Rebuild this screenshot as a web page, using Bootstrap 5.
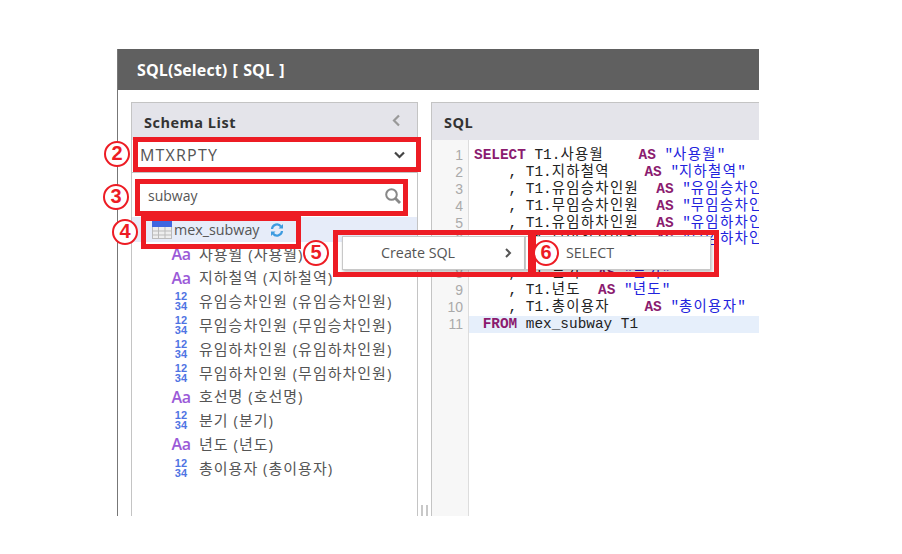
<!DOCTYPE html>
<html lang="ko"><head><meta charset="utf-8">
<title>SQL(Select)</title>
<link rel="stylesheet" href="https://cdn.jsdelivr.net/npm/bootstrap@5.3.0/dist/css/bootstrap.min.css">
<style>
html,body{height:100%;overflow:hidden;background:#fff}
body{font-family:"Open Sans","Noto Sans CJK KR",sans-serif;color:#555;position:relative}
.stage{padding:49px 0 0 117px;width:759px;height:516px;box-sizing:border-box}
.win{height:467px;border-left:1px solid #777}
.win-head{height:41px;background:#606060;color:#fff;font-size:16px;font-weight:700;padding-left:19px;letter-spacing:.1px;word-spacing:1px}
.win-body{padding:12px 0 0 13px;height:426px;gap:13px}
.pane-l{width:287px;border:1px solid #c4c4c4;border-bottom:0}
.pane-r{flex:1;border:1px solid #c4c4c4;border-right:0;border-bottom:0;min-width:0;overflow:hidden}
.pane-h{height:37px;background:#e4e4ea;color:#333;font-size:14.5px;font-weight:700;padding:2px 12px 0;letter-spacing:.5px}
.sel-row{height:33px;padding:0 8px 3px;background:#fff;font-size:16px;letter-spacing:1.2px;border-bottom:1px solid #c4c4c4}
.search-wrap{padding:8px 7px 7px}
.search{height:29px;padding:0 8px 0 9px;font-size:14px;background:#fff}
.tree{font-size:14px}
.root{height:25px;background:#e6ecf9;padding:1px 0 0 20px;gap:2px;color:#555;font-size:14.3px}
.node{height:23.8px;padding-left:38px;gap:7px;font-size:15px;letter-spacing:1px}
.ico{width:22px;flex:none;text-align:center}
.aa{color:#9b5ad8;font-weight:600;font-size:16px;font-family:"Open Sans",sans-serif;letter-spacing:-.5px}
.nn{color:#4f74e3;font-family:"Liberation Sans",sans-serif;font-size:11px;font-weight:700;line-height:10px;display:block;letter-spacing:.2px}
.gutter{width:37px;flex:none;background:#f7f7f7;border-right:1px solid #ddd;color:#999;text-align:right;padding:7px 5px 0 0}
.cl{height:16.9px;line-height:16.9px;white-space:pre;font-family:"Liberation Mono","Noto Sans CJK KR",monospace;font-size:14.4px;color:#222}
.gutter .cl{font-family:"Liberation Sans",sans-serif;font-size:14px;color:#aaa}
.code{flex:1;padding-top:7px;min-width:0;overflow:hidden}
.code .cl{padding-left:5px}
.ko{letter-spacing:1.3px}
.cur{background:#e6effb}
.kw{color:#8b1b6f;font-weight:700}
.st{color:#2222dd}
.ann{position:absolute;border:5px solid #ed1c24;pointer-events:none}
.num{position:absolute;width:26px;height:26px;border:2px solid #ed1c24;border-radius:50%;color:#ed1c24;font-weight:700;font-size:20px;line-height:21px;text-align:center;font-family:"Liberation Sans",sans-serif;background:#fff}
.ctx{position:absolute;background:#fff;border:1px solid #c8c8c8;box-shadow:1px 2px 3px rgba(0,0,0,.25);font-size:14.3px;color:#555}
.splitter{position:absolute;left:421px;top:505px;width:7px;height:11px;border-left:2px solid #c8c8c8;border-right:2px solid #c8c8c8}
</style></head>
<body>
<div class="stage">
 <div class="win d-flex flex-column">
  <div class="win-head d-flex align-items-center">SQL(Select) [ SQL ]</div>
  <div class="win-body d-flex">
   <div class="pane-l d-flex flex-column">
    <div class="pane-h d-flex align-items-center justify-content-between"><span>Schema List</span>
     <svg class="mb-1 me-1" width="9" height="13" viewBox="0 0 9 13"><path d="M7 1.500 2 6.500l5 5" fill="none" stroke="#999" stroke-width="2.2"/></svg></div>
    <div class="sel-row d-flex align-items-center justify-content-between"><span>MTXRPTY</span>
     <svg class="me-1" width="11" height="8" viewBox="0 0 11 8"><path d="M1 1.500l4.500 4.500L10 1.500" fill="none" stroke="#444" stroke-width="2.2"/></svg></div>
    <div class="search-wrap"><div class="search d-flex align-items-center justify-content-between"><span>subway</span>
     <svg width="18" height="18" viewBox="0 0 18 18"><circle cx="7.500" cy="7.500" r="5.300" fill="none" stroke="#888" stroke-width="2"/><path d="M11.500 11.500 16 16" stroke="#888" stroke-width="2.800"/></svg></div></div>
    <div class="tree">
     <div class="root d-flex align-items-center">
      <svg width="20" height="18" viewBox="0 0 20 18"><rect x=".5" y=".5" width="19" height="17" fill="#eee" stroke="#bbb"/><rect width="20" height="6" fill="#3f66e0"/><path d="M0 10h20M0 14h20M6.500 6v12M13 6v12" stroke="#bbb"/></svg>
      <span>mex_subway</span>
      <svg class="ms-2" width="14" height="14" viewBox="0 0 14 14"><path d="M2 6a5 5 0 0 1 9-2.500M12 8a5 5 0 0 1-9 2.500" fill="none" stroke="#3d9be0" stroke-width="2.200"/><path d="M13 1v4.500H8.500zM1 13V8.500h4.500z" fill="#3d9be0"/></svg>
     </div>
     <div class="node d-flex align-items-center"><span class="ico aa">Aa</span><span>사용월 (사용월)</span></div>
     <div class="node d-flex align-items-center"><span class="ico aa">Aa</span><span>지하철역 (지하철역)</span></div>
     <div class="node d-flex align-items-center"><span class="ico"><span class="nn">12</span><span class="nn">34</span></span><span>유임승차인원 (유임승차인원)</span></div>
     <div class="node d-flex align-items-center"><span class="ico"><span class="nn">12</span><span class="nn">34</span></span><span>무임승차인원 (무임승차인원)</span></div>
     <div class="node d-flex align-items-center"><span class="ico"><span class="nn">12</span><span class="nn">34</span></span><span>유임하차인원 (유임하차인원)</span></div>
     <div class="node d-flex align-items-center"><span class="ico"><span class="nn">12</span><span class="nn">34</span></span><span>무임하차인원 (무임하차인원)</span></div>
     <div class="node d-flex align-items-center"><span class="ico aa">Aa</span><span>호선명 (호선명)</span></div>
     <div class="node d-flex align-items-center"><span class="ico"><span class="nn">12</span><span class="nn">34</span></span><span>분기 (분기)</span></div>
     <div class="node d-flex align-items-center"><span class="ico aa">Aa</span><span>년도 (년도)</span></div>
     <div class="node d-flex align-items-center"><span class="ico"><span class="nn">12</span><span class="nn">34</span></span><span>총이용자 (총이용자)</span></div>
    </div>
   </div>
   <div class="pane-r d-flex flex-column">
    <div class="pane-h d-flex align-items-center">SQL</div>
    <div class="d-flex flex-grow-1">
     <div class="gutter"><div class="cl">1</div><div class="cl">2</div><div class="cl">3</div><div class="cl">4</div><div class="cl">5</div><div class="cl">6</div><div class="cl">7</div><div class="cl">8</div><div class="cl">9</div><div class="cl">10</div><div class="cl">11</div></div>
     <div class="code">
      <div class="cl"><span class="kw">SELECT</span> T1.<span class="ko">사용월</span>    <span class="kw">AS</span> <span class="st">"<span class="ko">사용월</span>"</span></div>
      <div class="cl">    , T1.<span class="ko">지하철역</span>    <span class="kw">AS</span> <span class="st">"<span class="ko">지하철역</span>"</span></div>
      <div class="cl">    , T1.<span class="ko">유임승차인원</span>  <span class="kw">AS</span> <span class="st">"<span class="ko">유임승차인원</span>"</span></div>
      <div class="cl">    , T1.<span class="ko">무임승차인원</span>  <span class="kw">AS</span> <span class="st">"<span class="ko">무임승차인원</span>"</span></div>
      <div class="cl">    , T1.<span class="ko">유임하차인원</span>  <span class="kw">AS</span> <span class="st">"<span class="ko">유임하차인원</span>"</span></div>
      <div class="cl">    , T1.<span class="ko">무임하차인원</span>  <span class="kw">AS</span> <span class="st">"<span class="ko">무임하차인원</span>"</span></div>
      <div class="cl">    , T1.<span class="ko">호선명</span>  <span class="kw">AS</span> <span class="st">"<span class="ko">호선명</span>"</span></div>
      <div class="cl">    , T1.<span class="ko">분기</span>  <span class="kw">AS</span> <span class="st">"<span class="ko">분기</span>"</span></div>
      <div class="cl">    , T1.<span class="ko">년도</span>  <span class="kw">AS</span> <span class="st">"<span class="ko">년도</span>"</span></div>
      <div class="cl">    , T1.<span class="ko">총이용자</span>    <span class="kw">AS</span> <span class="st">"<span class="ko">총이용자</span>"</span></div>
      <div class="cl cur"> <span class="kw">FROM</span> mex_subway T1</div>
     </div>
    </div>
   </div>
  </div>
 </div>
</div>
<div class="splitter"></div>
<div class="ctx d-flex align-items-center justify-content-between" style="left:342px;top:236px;width:183px;height:34px;padding:0 12px 0 38px"><span>Create SQL</span><svg width="8" height="10" viewBox="0 0 8 10"><path d="M2 1l4 4-4 4" fill="none" stroke="#555" stroke-width="2"/></svg></div>
<div class="ctx d-flex align-items-center" style="left:525px;top:236px;width:186px;height:34px;padding-left:40px"><span>SELECT</span></div>
<div class="ann" style="left:133px;top:137px;width:288px;height:35px"></div>
<div class="ann" style="left:135px;top:179px;width:273px;height:37px"></div>
<div class="ann" style="left:141px;top:216px;width:160px;height:33px"></div>
<div class="ann" style="left:333px;top:230px;width:203px;height:47px"></div>
<div class="ann" style="left:528px;top:230px;width:191px;height:47px"></div>
<div class="num" style="left:104px;top:141px">2</div>
<div class="num" style="left:103px;top:184px">3</div>
<div class="num" style="left:112px;top:219px">4</div>
<div class="num" style="left:303px;top:240px">5</div>
<div class="num" style="left:533px;top:240px">6</div>
<script src="https://cdn.jsdelivr.net/npm/bootstrap@5.3.0/dist/js/bootstrap.bundle.min.js"></script>
</body></html>
